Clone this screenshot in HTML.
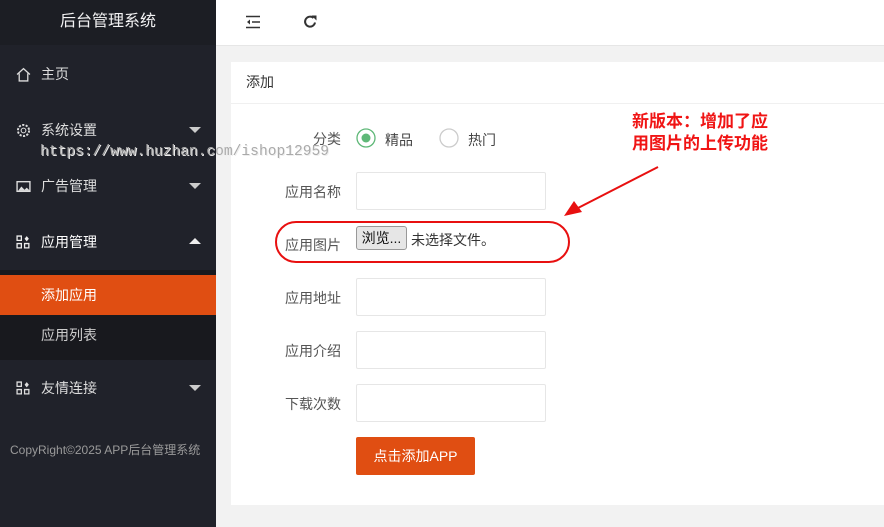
<!DOCTYPE html>
<html><head><meta charset="utf-8"><style>
*{margin:0;padding:0;box-sizing:border-box}
body{width:884px;height:527px;overflow:hidden;background:#f2f2f2;font-family:"Liberation Sans","Noto Sans CJK SC",sans-serif;font-size:14px;color:#333;position:relative}
.side{position:absolute;left:0;top:0;width:216px;height:527px;background:#20222a}
.logo{height:45px;background:#1c1e24;color:#fff;font-size:16px;text-align:center;line-height:44px;opacity:.95}
.mi{position:absolute;left:0;width:216px;height:40px;color:#ddd;line-height:40px;font-size:14px}
.mi .ic{position:absolute;left:16px;top:13px;width:15px;height:15px}
.mi .t{position:absolute;left:41px}
.mi .ar{position:absolute;left:189px;top:17px;width:0;height:0;border-left:6px solid transparent;border-right:6px solid transparent;border-top:6px solid #ccc}
.mi .up{border-top:none;border-bottom:6px solid #eee;top:16px}
.sub{position:absolute;left:0;top:270px;width:216px;height:90px;background:#18191e}
.top{position:absolute;left:216px;top:0;right:0;height:46px;background:#fff;border-bottom:1px solid #e6e6e6}
.card{position:absolute;left:231px;top:62px;width:653px;height:443px;background:#fff}
.ch{height:42px;border-bottom:1px solid #f0f0f0;line-height:40px;padding-left:15px;font-size:14px}
.lb{position:absolute;width:110px;left:231px;text-align:right;font-size:14px;color:#555}
.inp{position:absolute;left:356px;width:190px;height:38px;border:1px solid #e6e6e6;background:#fff;border-radius:2px}
</style></head><body>
<div class="side">
<div class="logo">后台管理系统</div>
<div class="mi" style="top:54px"><svg class="ic" viewBox="0 0 14 14"><path d="M1 7L7 1.5 13 7M3 6v7h8V6" fill="none" stroke="#ddd" stroke-width="1.2"/></svg><span class="t">主页</span></div>
<div class="mi" style="top:110px"><svg class="ic" viewBox="0 0 14 14"><circle cx="7" cy="7" r="5.2" fill="none" stroke="#ddd" stroke-width="1.8" stroke-dasharray="2 1.3"/><circle cx="7" cy="7" r="2.2" fill="none" stroke="#ddd"/></svg><span class="t">系统设置</span><i class="ar"></i></div>
<div class="mi" style="top:166px"><svg class="ic" viewBox="0 0 14 14"><rect x="1" y="2.5" width="12" height="9" fill="none" stroke="#ddd" stroke-width="1.3"/><path d="M2 11l3-4 3 3 2-2 3 3z" fill="#ddd"/></svg><span class="t">广告管理</span><i class="ar"></i></div>
<div class="mi" style="top:222px;color:#fff"><svg class="ic" viewBox="0 0 14 14"><path d="M1 1h4v4H1zM1 8h4v4H1zM8 8h4v4H8z" fill="none" stroke="#eee" stroke-width="1.2"/><path d="M10 1l2 2.5L10 6 8 3.5z" fill="#eee"/></svg><span class="t">应用管理</span><i class="ar up"></i></div>
<div class="sub"></div>
<div class="mi" style="top:275px;background:#e04e12;color:#fff"><span class="t">添加应用</span></div>
<div class="mi" style="top:315px;color:#ccc"><span class="t">应用列表</span></div>
<div class="mi" style="top:368px"><svg class="ic" viewBox="0 0 14 14"><path d="M1 1h4v4H1zM1 8h4v4H1zM8 8h4v4H8z" fill="none" stroke="#ddd" stroke-width="1.2"/><path d="M10 1l2 2.5L10 6 8 3.5z" fill="#ddd"/></svg><span class="t">友情连接</span><i class="ar"></i></div>
<div style="position:absolute;left:10px;top:441px;font-size:12px;color:#9a9a9a">CopyRight©2025 APP后台管理系统</div>
</div>
<div class="top">
<svg style="position:absolute;left:29px;top:15px" width="16" height="14" viewBox="0 0 16 14"><path d="M1 1.5h14M7 7h8M1 12.5h14" stroke="#333" stroke-width="1.6"/><path d="M5 4.5L2 7l3 2.5z" fill="#333"/></svg>
<svg style="position:absolute;left:86px;top:14px" width="16" height="16" viewBox="0 0 16 16"><path d="M13 8.5A5 5 0 1 1 11.5 4" fill="none" stroke="#333" stroke-width="2"/><path d="M9.5 1.5h5v5z" fill="#333"/></svg>
</div>
<div class="card"><div class="ch">添加</div></div>
<div class="lb" style="top:129px">分类</div>
<svg style="position:absolute;left:356px;top:128px" width="20" height="20"><circle cx="10" cy="10" r="9" fill="#fff" stroke="#5fb878" stroke-width="1.3"/><circle cx="10" cy="10" r="4.5" fill="#5fb878"/></svg>
<span style="position:absolute;left:385px;top:130px;color:#444">精品</span>
<svg style="position:absolute;left:439px;top:128px" width="20" height="20"><circle cx="10" cy="10" r="9" fill="#fff" stroke="#ccc" stroke-width="1.3"/></svg>
<span style="position:absolute;left:468px;top:130px;color:#444">热门</span>
<div class="lb" style="top:182px">应用名称</div><div class="inp" style="top:172px"></div>
<div class="lb" style="top:235px">应用图片</div>
<div style="position:absolute;left:356px;top:226px;width:51px;height:24px;border:1px solid #999;border-radius:3px;background:#e6e6e6;font-size:14px;line-height:22px;text-align:center;color:#111">浏览...</div>
<span style="position:absolute;left:411px;top:230px;color:#333">未选择文件。</span>
<div class="lb" style="top:288px">应用地址</div><div class="inp" style="top:278px"></div>
<div class="lb" style="top:341px">应用介绍</div><div class="inp" style="top:331px"></div>
<div class="lb" style="top:394px">下载次数</div><div class="inp" style="top:384px"></div>
<div style="position:absolute;left:356px;top:437px;width:119px;height:38px;background:#e04e12;color:#fff;line-height:38px;text-align:center;border-radius:2px">点击添加APP</div>
<div style="position:absolute;left:275px;top:221px;width:295px;height:42px;border:2px solid #e81010;border-radius:21px"></div>
<div style="position:absolute;left:632px;top:111px;color:#f01414;font-weight:bold;font-size:17px;line-height:22px">新版本：增加了应<br>用图片的上传功能</div>
<svg style="position:absolute;left:560px;top:160px" width="110" height="60"><path d="M98 7L18 48" stroke="#e81010" stroke-width="2"/><path d="M4 56L14 41 22 52z" fill="#e81010"/></svg>
<div style="position:absolute;left:40px;top:144px;font-family:'Liberation Mono',monospace;font-size:14.6px;color:#aaa;text-shadow:1px 1px 0 #eee">https://www.huzhan.com/ishop12959</div>
</body></html>
